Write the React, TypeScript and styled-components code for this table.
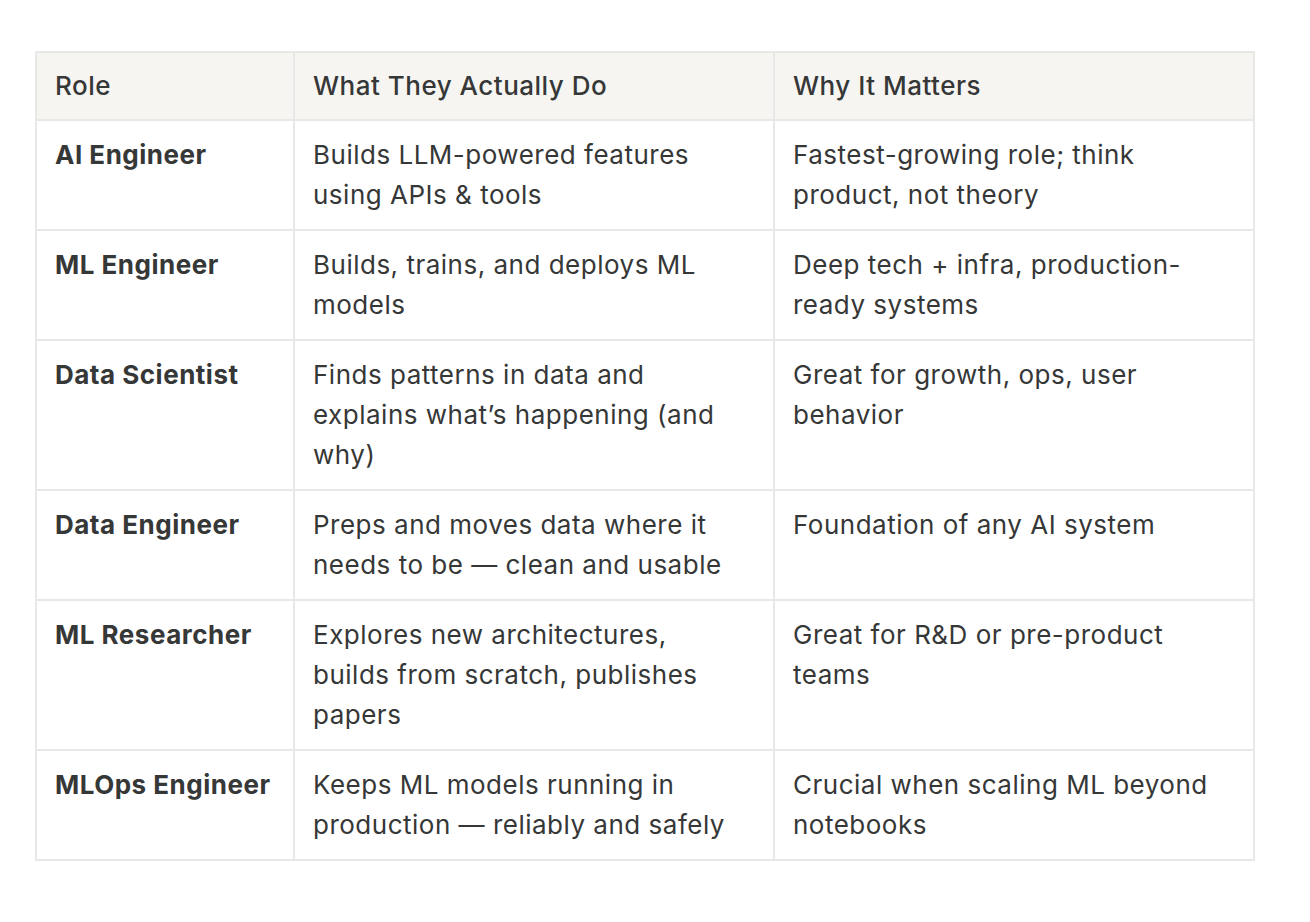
import React from "react";
import styled, { createGlobalStyle } from "styled-components";

const Global = createGlobalStyle`
  html, body { margin: 0; padding: 0; background: #ffffff; }
  body { font-family: Inter, "Open Sans", "Liberation Sans", sans-serif; }
`;

const Page = styled.div`
  padding: 51px 0 0 35px;
`;

const Grid = styled.div`
  display: grid;
  grid-template-columns: 258px 480px 480px;
  width: 1220px;
  border-top: 2px solid #e8e8e6;
  border-left: 2px solid #e8e8e6;
  box-sizing: border-box;
`;

const Cell = styled.div<{ $head?: boolean; $bold?: boolean }>`
  border-right: 2px solid #e8e8e6;
  border-bottom: 2px solid #e8e8e6;
  padding: ${(p) => (p.$head ? "13px" : "14px")} ${(p) => (p.$bold ? "10px" : "26px")}
    ${(p) => (p.$head ? "13px" : "14px")} 18px;
  background: ${(p) => (p.$head ? "#f6f5f2" : "#ffffff")};
  font-size: 26px;
  line-height: 40px;
  font-weight: ${(p) => (p.$bold ? 680 : p.$head ? 500 : 400)};
  color: #363737;
  letter-spacing: 0.5px;
`;

const rows: [string, string, string][] = [
  ["AI Engineer", "Builds LLM-powered features using APIs & tools", "Fastest-growing role; think product, not theory"],
  ["ML Engineer", "Builds, trains, and deploys ML models", "Deep tech + infra, production-ready systems"],
  ["Data Scientist", "Finds patterns in data and explains what\u2019s happening (and why)", "Great for growth, ops, user behavior"],
  ["Data Engineer", "Preps and moves data where it needs to be \u2014 clean and usable", "Foundation of any AI system"],
  ["ML Researcher", "Explores new architectures, builds from scratch, publishes papers", "Great for R&D or pre-product teams"],
  ["MLOps Engineer", "Keeps ML models running in production \u2014 reliably and safely", "Crucial when scaling ML beyond notebooks"],
];

export default function App() {
  return (
    <>
      <Global />
      <Page>
        <Grid>
          <Cell $head>Role</Cell>
          <Cell $head>What They Actually Do</Cell>
          <Cell $head>Why It Matters</Cell>
          {rows.map(([a, b, c]) => (
            <React.Fragment key={a}>
              <Cell $bold>{a}</Cell>
              <Cell>{b}</Cell>
              <Cell>{c}</Cell>
            </React.Fragment>
          ))}
        </Grid>
      </Page>
    </>
  );
}
